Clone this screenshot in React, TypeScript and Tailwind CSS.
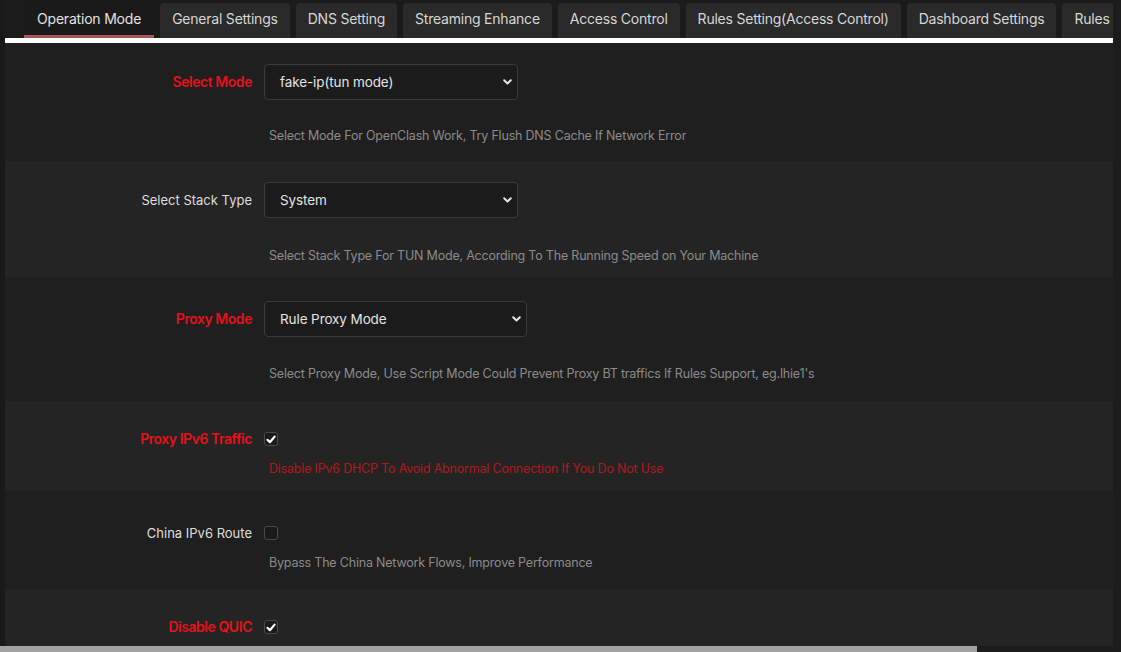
import React from 'react';

const tabs = [
  'Operation Mode',
  'General Settings',
  'DNS Setting',
  'Streaming Enhance',
  'Access Control',
  'Rules Setting(Access Control)',
  'Dashboard Settings',
  'Rules Update',
];

const Chevron = () => (
  <svg width="9" height="6" viewBox="0 0 9 6" fill="none">
    <path d="M1.2 1.2L4.5 4.5l3.3-3.3" stroke="#e5e5e5" strokeWidth="2" strokeLinecap="round" strokeLinejoin="round" />
  </svg>
);

const FakeSelect: React.FC<{ value: string; width: string }> = ({ value, width }) => (
  <div
    className={`${width} h-[36px] flex items-center justify-between pl-[15px] pr-[5px] rounded-[4px] border border-[#3b3b3b] bg-[#1b1b1b] text-[13.5px] tracking-[-0.1px] text-[#e3e3e3]`}
  >
    <span>{value}</span>
    <Chevron />
  </div>
);

const Checkbox: React.FC<{ checked?: boolean }> = ({ checked }) => (
  <div className="w-[14px] h-[14px] rounded-[3px] border border-[#4a4a4a] bg-[#1a1a1a] flex items-center justify-center">
    {checked && (
      <svg width="10" height="9" viewBox="0 0 10 9" fill="none">
        <path d="M1.5 4.8L3.9 7.2 8.6 1.6" stroke="#ffffff" strokeWidth="2.2" strokeLinecap="round" strokeLinejoin="round" />
      </svg>
    )}
  </div>
);

const Label: React.FC<{ text: string; red?: boolean }> = ({ text, red }) => (
  <div
    className={`w-[247px] shrink-0 text-right leading-[20px] ${
      red ? 'text-[14px] text-[#e6121b] font-semibold tracking-[-0.45px]' : 'text-[13px] text-[#dedede]'
    }`}
  >
    {text}
  </div>
);

interface RowProps {
  label: string;
  red?: boolean;
  control: React.ReactNode;
  desc?: string;
  descRed?: boolean;
  alt?: boolean;
  pad: string;
  gap: string;
}

const Row: React.FC<RowProps> = ({ label, red, control, desc, descRed, alt, pad, gap }) => (
  <div className={`${alt ? 'bg-[#242424]' : 'bg-[#1f1f1f]'} ${pad} shrink-0`}>
    <div className="flex items-center">
      <Label text={label} red={red} />
      <div className="ml-[12px] flex items-center min-h-[20px]">{control}</div>
    </div>
    {desc && (
      <div
        className={`${gap} ml-[264px] text-[12.5px] tracking-[-0.2px] leading-[20px] ${
          descRed ? 'text-[#b01a1f]' : 'text-[#8b8b8b]'
        }`}
      >
        {desc}
      </div>
    )}
  </div>
);

export default function App() {
  return (
    <div className="w-[1121px] h-[652px] overflow-hidden bg-[#1b1b1b] flex flex-col font-['Inter',sans-serif]">
      <div className="flex-1 min-h-0 flex">
        <div className="w-[5px] shrink-0 bg-[#191919]" />
        <div className="flex-1 min-w-0 overflow-hidden flex flex-col bg-[#1f1f1f]">
          {/* Tabs */}
          <div className="bg-[#1b1b1b] pt-[3px] pl-[19px] flex gap-[6px] whitespace-nowrap shrink-0">
            {tabs.map((t, i) =>
              i === 0 ? (
                <div
                  key={t}
                  className="h-[35px] px-[13px] pb-[1px] flex items-center rounded-t-[4px] bg-[#1a1a1a] border-b-[3px] border-[#a85656] text-[14px] tracking-[-0.2px] text-[#e2e2e2] shrink-0"
                >
                  {t}
                </div>
              ) : (
                <div
                  key={t}
                  className="h-[35px] px-[12px] pb-[4px] flex items-center rounded-t-[4px] bg-[#2a2a2a] text-[14px] tracking-[-0.22px] text-[#d6d6d6] shrink-0"
                >
                  {t}
                </div>
              )
            )}
          </div>
          <div className="h-[5px] bg-white shrink-0" />

          <Row
            label="Select Mode"
            red
            control={<FakeSelect value="fake-ip(tun mode)" width="w-[254px]" />}
            desc="Select Mode For OpenClash Work, Try Flush DNS Cache If Network Error"
            pad="pt-[21px] pb-[15px]"
            gap="mt-[26px]"
          />
          <Row
            label="Select Stack Type"
            alt
            control={<FakeSelect value="System" width="w-[254px]" />}
            desc="Select Stack Type For TUN Mode, According To The Running Speed on Your Machine"
            pad="pt-[21px] pb-[11px]"
            gap="mt-[28px]"
          />
          <Row
            label="Proxy Mode"
            red
            control={<FakeSelect value="Rule Proxy Mode" width="w-[263px]" />}
            desc="Select Proxy Mode, Use Script Mode Could Prevent Proxy BT traffics If Rules Support, eg.lhie1's"
            pad="pt-[24px] pb-[17px]"
            gap="mt-[27px]"
          />
          <Row
            label="Proxy IPv6 Traffic"
            red
            alt
            control={<Checkbox checked />}
            desc="Disable IPv6 DHCP To Avoid Abnormal Connection If You Do Not Use"
            descRed
            pad="pt-[28px] pb-[12px]"
            gap="mt-[10px]"
          />
          <Row
            label="China IPv6 Route"
            control={<Checkbox />}
            desc="Bypass The China Network Flows, Improve Performance"
            pad="pt-[32px] pb-[16px]"
            gap="mt-[10px]"
          />
          <Row
            label="Disable QUIC"
            red
            alt
            control={<Checkbox checked />}
            pad="pt-[28px] pb-[40px]"
            gap="mt-[10px]"
          />
        </div>
        <div className="w-[8px] shrink-0 bg-[#1c1c1c]" />
      </div>
      {/* horizontal scrollbar */}
      <div className="h-[6px] shrink-0 flex">
        <div className="w-[977px] bg-[#a3a3a3]" />
        <div className="flex-1 bg-[#1c1c1c]" />
      </div>
    </div>
  );
}
